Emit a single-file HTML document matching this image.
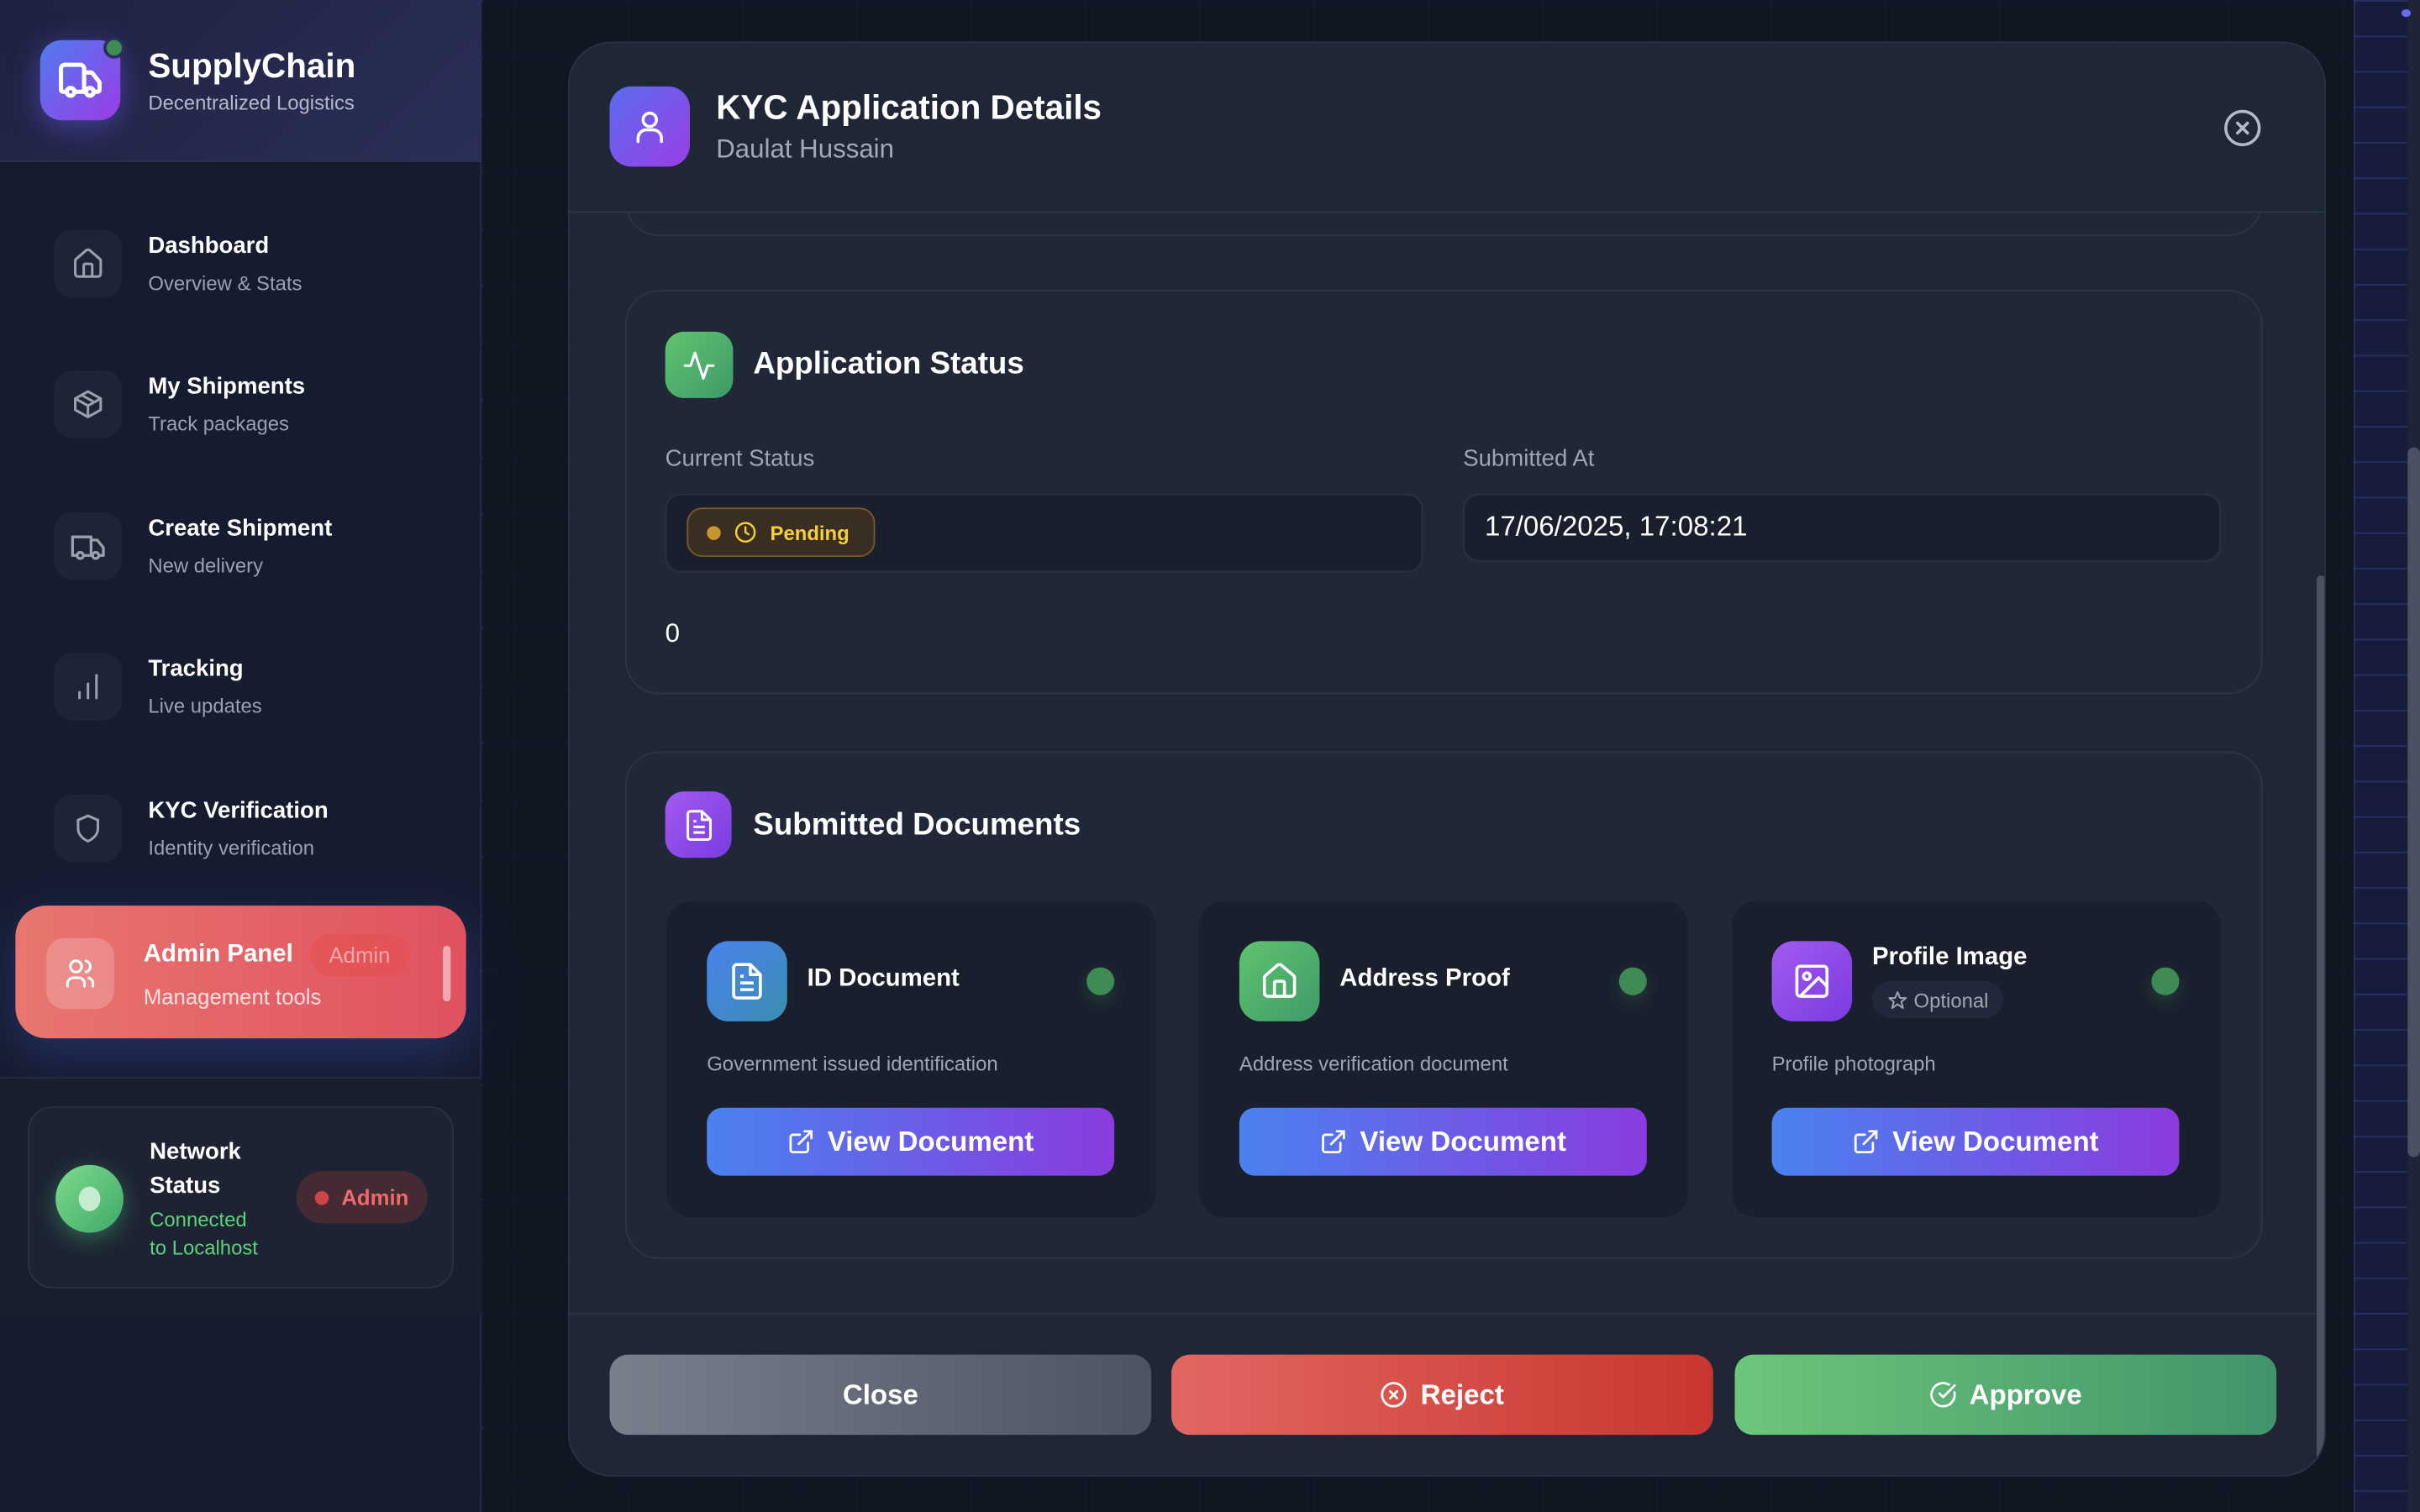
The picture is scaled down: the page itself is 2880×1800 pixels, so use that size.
<!DOCTYPE html>
<html><head><meta charset="utf-8">
<style>
*{box-sizing:border-box;margin:0;padding:0}
html,body{width:2880px;height:1800px;overflow:hidden;background:#141a2a}
#s{position:absolute;left:0;top:0;width:1568px;height:980px;transform:scale(1.836735);transform-origin:0 0;font-family:"Liberation Sans",sans-serif;color:#fff;overflow:hidden;
background-color:#141a2c;
background-image:linear-gradient(rgba(60,80,160,.25) 1px,transparent 1px),linear-gradient(90deg,rgba(60,80,160,.25) 1px,transparent 1px);background-size:37px 37px}
.a{position:absolute}
.sb{left:0;top:0;width:312px;height:980px;background:#161c30;border-right:1px solid #242c44}
.hd{left:0;top:0;width:312px;height:105px;background:linear-gradient(135deg,#1e2240,#2a2f58);border-bottom:1px solid #2a3152}
.ib{width:44px;height:44px;border-radius:12px;background:#1e2436;display:flex;align-items:center;justify-content:center}
.nt{font-size:15px;font-weight:bold;color:#fff}
.ns{font-size:13px;color:#9aa0b0}
.ov{left:313px;top:0;width:1212px;height:980px;background:rgba(17,22,34,.85)}
.md{left:368px;top:27px;width:1139px;height:930px;border-radius:28px;background:#1f2736;border:1px solid #2a3344;overflow:hidden}
.card{border:1px solid #2c3546;border-radius:22px;background:#202838}
.dc{width:317px;height:205px;border-radius:16px;background:#1a1f2e}
.di{width:52px;height:52px;border-radius:14px;display:flex;align-items:center;justify-content:center}
.vb{width:264px;height:44px;border-radius:10px;background:linear-gradient(90deg,#4a82ef,#8a3be0);display:flex;align-items:center;justify-content:center;font-size:18px;font-weight:bold;gap:8px}
.dot{width:18px;height:18px;border-radius:50%;background:#3f8a55;box-shadow:0 4px 10px rgba(60,140,80,.3)}
.fb{height:52px;width:351px;border-radius:12px;display:flex;align-items:center;justify-content:center;font-size:18px;font-weight:bold;gap:8px;top:878px}
</style></head><body><div id="s">
<div class="a sb"></div>
<div class="a hd"></div>
<div class="a" style="left:26px;top:26px;width:52px;height:52px;border-radius:14px;background:linear-gradient(135deg,#4f7cf0,#9b3be6);box-shadow:0 4px 18px rgba(100,90,240,.5);display:flex;align-items:center;justify-content:center">
<svg width="30" height="30" viewBox="0 0 24 24" fill="none" stroke="#fff" stroke-width="2.2" stroke-linecap="round" stroke-linejoin="round"><path d="M14 18V6a2 2 0 0 0-2-2H4a2 2 0 0 0-2 2v11a1 1 0 0 0 1 1h2"/><path d="M15 18H9"/><path d="M19 18h2a1 1 0 0 0 1-1v-3.65a1 1 0 0 0-.22-.62l-3.48-4.350A1 1 0 0 0 17.52 8H14"/><circle cx="17" cy="18" r="2"/><circle cx="7" cy="18" r="2"/></svg></div>
<div class="a" style="left:67px;top:24px;width:14px;height:14px;border-radius:50%;background:#3f8a55;border:2px solid #2a2f58"></div>
<div class="a" style="left:96px;top:30px;font-size:22px;font-weight:bold">SupplyChain</div>
<div class="a" style="left:96px;top:59px;font-size:13px;color:#b4b8c8">Decentralized Logistics</div>

<div class="a ib" style="left:35px;top:149px"><svg width="22" height="22" viewBox="0 0 24 24" fill="none" stroke="#9aa0ae" stroke-width="1.8"><path d="M15 21v-8a1 1 0 0 0-1-1h-4a1 1 0 0 0-1 1v8"/><path d="M3 10a2 2 0 0 1 .7-1.5l7-6a2 2 0 0 1 2.6 0l7 6A2 2 0 0 1 21 10v9a2 2 0 0 1-2 2H5a2 2 0 0 1-2-2z"/></svg></div>
<div class="a nt" style="left:96px;top:151px">Dashboard</div><div class="a ns" style="left:96px;top:176px">Overview &amp; Stats</div>
<div class="a ib" style="left:35px;top:240px"><svg width="22" height="22" viewBox="0 0 24 24" fill="none" stroke="#9aa0ae" stroke-width="1.8" stroke-linejoin="round"><path d="M21 8 12 3 3 8v8l9 5 9-5z"/><path d="M3 8l9 5 9-5M12 13v8M7.5 5.5l9 5"/></svg></div>
<div class="a nt" style="left:96px;top:242px">My Shipments</div><div class="a ns" style="left:96px;top:267px">Track packages</div>
<div class="a ib" style="left:35px;top:332px"><svg width="24" height="24" viewBox="0 0 24 24" fill="none" stroke="#9aa0ae" stroke-width="1.8" stroke-linejoin="round"><path d="M14 18V6H2v12h3"/><path d="M15 18H9M19 18h3v-5l-4-5h-4"/><circle cx="17" cy="18" r="2"/><circle cx="7" cy="18" r="2"/></svg></div>
<div class="a nt" style="left:96px;top:334px">Create Shipment</div><div class="a ns" style="left:96px;top:359px">New delivery</div>
<div class="a ib" style="left:35px;top:423px"><svg width="22" height="22" viewBox="0 0 24 24" fill="none" stroke="#9aa0ae" stroke-width="1.8" stroke-linecap="round"><path d="M6 20v-4M12 20V10M18 20V4"/></svg></div>
<div class="a nt" style="left:96px;top:425px">Tracking</div><div class="a ns" style="left:96px;top:450px">Live updates</div>
<div class="a ib" style="left:35px;top:515px"><svg width="22" height="22" viewBox="0 0 24 24" fill="none" stroke="#9aa0ae" stroke-width="1.8"><path d="M12 3l7 3v6c0 4-3 7-7 9-4-2-7-5-7-9V6z"/></svg></div>
<div class="a nt" style="left:96px;top:517px">KYC Verification</div><div class="a ns" style="left:96px;top:542px">Identity verification</div>

<div class="a" style="left:10px;top:587px;width:292px;height:86px;border-radius:20px;background:linear-gradient(90deg,#e8766f,#e0525f);box-shadow:0 10px 30px rgba(60,90,200,.35)"></div>
<div class="a" style="left:30px;top:608px;width:44px;height:46px;border-radius:12px;background:rgba(255,255,255,.2);display:flex;align-items:center;justify-content:center"><svg width="22" height="22" viewBox="0 0 24 24" fill="none" stroke="#fff" stroke-width="1.8" stroke-linecap="round"><circle cx="9" cy="7" r="4"/><path d="M3 21v-2a4 4 0 0 1 4-4h4a4 4 0 0 1 4 4v2M16 3.1a4 4 0 0 1 0 7.8M21 21v-2a4 4 0 0 0-3-3.9"/></svg></div>
<div class="a" style="left:93px;top:610px;font-size:16px;font-weight:bold">Admin Panel</div>
<div class="a" style="left:201px;top:605px;width:64px;height:28px;border-radius:14px;background:rgba(230,80,80,.6);color:#f5a9a9;font-size:14px;display:flex;align-items:center;justify-content:center">Admin</div>
<div class="a" style="left:93px;top:638px;font-size:14px;color:#fde0e0">Management tools</div>
<div class="a" style="left:287px;top:613px;width:5px;height:36px;border-radius:3px;background:rgba(255,255,255,.5)"></div>
<div class="a" style="left:0;top:698px;width:312px;height:155px;background:#181e2e;border-top:1px solid #242c40"></div>
<div class="a" style="left:18px;top:717px;width:276px;height:118px;border-radius:16px;background:#1d2333;border:1px solid #2a3142"></div>
<div class="a" style="left:36px;top:755px;width:44px;height:44px;border-radius:50%;background:linear-gradient(135deg,#7ddc8c,#3fa86a);box-shadow:0 4px 14px rgba(80,200,120,.4)"></div>
<div class="a" style="left:51px;top:769px;width:14px;height:16px;border-radius:50%;background:#c5ecd0"></div>
<div class="a" style="left:97px;top:736px;font-size:15px;font-weight:bold;line-height:22px">Network<br>Status</div>
<div class="a" style="left:97px;top:782px;font-size:13px;color:#5fd07a;line-height:18px">Connected<br>to Localhost</div>
<div class="a" style="left:192px;top:759px;width:85px;height:34px;border-radius:17px;background:#452a33;display:flex;align-items:center;justify-content:center;gap:8px;font-size:14px;font-weight:bold;color:#ec6b6b"><span style="width:9px;height:9px;border-radius:50%;background:#c44"></span>Admin</div>

<div class="a ov"></div>
<div class="a" style="left:1525px;top:0;width:35px;height:980px;background-color:#171b3c;background-image:linear-gradient(rgba(70,80,170,.35) 1px,transparent 1px),linear-gradient(90deg,rgba(70,80,170,.35) 1px,transparent 1px);background-size:37px 23px"></div>
<div class="a" style="left:1560px;top:0;width:8px;height:980px;background:#1f2436"></div>
<div class="a" style="left:1560px;top:290px;width:8px;height:460px;border-radius:4px;background:#4a5262"></div>
<div class="a" style="left:1556px;top:6px;width:6px;height:5px;border-radius:50%;background:#6a6af0"></div>

<div class="a md">
<div class="a card" style="left:36px;top:70px;width:1061px;height:55px;border-top:none;border-radius:0 0 22px 22px"></div>
<div class="a" style="left:0;top:0;width:1139px;height:110px;background:#1f2736;z-index:1;border-bottom:1px solid #2c3546"></div>
<div class="a" style="left:26px;top:28px;width:52px;height:52px;border-radius:14px;background:linear-gradient(135deg,#5b6cf0,#9a3ee6);display:flex;align-items:center;justify-content:center;z-index:2"><svg width="26" height="26" viewBox="0 0 24 24" fill="none" stroke="#fff" stroke-width="1.8" stroke-linecap="round"><circle cx="12" cy="8" r="4"/><path d="M5 21v-2a5 5 0 0 1 5-5h4a5 5 0 0 1 5 5v2"/></svg></div>
<div class="a" style="left:95px;top:29px;font-size:22px;font-weight:bold;z-index:2">KYC Application Details</div>
<div class="a" style="left:95px;top:59px;font-size:17px;color:#a4a9b6;z-index:2">Daulat Hussain</div>
<svg class="a" style="left:1071px;top:42px;z-index:2" width="26" height="26" viewBox="0 0 24 24" fill="none" stroke="#b6bac4" stroke-width="1.8" stroke-linecap="round"><circle cx="12" cy="12" r="10"/><path d="M15 9l-6 6M9 9l6 6"/></svg>

<div class="a card" style="left:36px;top:160px;width:1061px;height:262px"></div>
<div class="a" style="left:62px;top:187px;width:44px;height:43px;border-radius:12px;background:linear-gradient(135deg,#5fc46e,#3f9a6a);display:flex;align-items:center;justify-content:center"><svg width="22" height="22" viewBox="0 0 24 24" fill="none" stroke="#fff" stroke-width="1.8" stroke-linecap="round" stroke-linejoin="round"><path d="M22 12h-4l-3 9L9 3l-3 9H2"/></svg></div>
<div class="a" style="left:119px;top:197px;font-size:20px;font-weight:bold">Application Status</div>
<div class="a" style="left:62px;top:261px;font-size:15px;color:#a0a5b2">Current Status</div>
<div class="a" style="left:579px;top:261px;font-size:15px;color:#a0a5b2">Submitted At</div>
<div class="a" style="left:62px;top:292px;width:491px;height:51px;border-radius:10px;background:#1a1f2d;border:1px solid #2a3242"></div>
<div class="a" style="left:76px;top:301px;width:122px;height:32px;border-radius:10px;background:#3a2e22;border:1px solid #7a5a2a;display:flex;align-items:center;gap:8px;padding-left:12px;font-size:13px;font-weight:bold;color:#f5cf3a"><span style="width:9px;height:9px;border-radius:50%;background:#c8962e"></span><svg width="16" height="16" viewBox="0 0 24 24" fill="none" stroke="#f5cf3a" stroke-width="2" stroke-linecap="round"><circle cx="12" cy="12" r="9"/><path d="M12 7v5l3 2"/></svg>Pending</div>
<div class="a" style="left:579px;top:292px;width:491px;height:44px;border-radius:10px;background:#1a1f2d;border:1px solid #2a3242"></div>
<div class="a" style="left:593px;top:303px;font-size:18px">17/06/2025, 17:08:21</div>
<div class="a" style="left:62px;top:373px;font-size:17px">0</div>

<div class="a card" style="left:36px;top:459px;width:1061px;height:329px"></div>
<div class="a" style="left:62px;top:485px;width:43px;height:43px;border-radius:12px;background:linear-gradient(135deg,#a35af0,#7a3be0);display:flex;align-items:center;justify-content:center"><svg width="22" height="22" viewBox="0 0 24 24" fill="none" stroke="#fff" stroke-width="1.8" stroke-linejoin="round"><path d="M14 2H6a2 2 0 0 0-2 2v16a2 2 0 0 0 2 2h12a2 2 0 0 0 2-2V8z"/><path d="M14 2v6h6M8 13h8M8 17h8M8 9h2"/></svg></div>
<div class="a" style="left:119px;top:496px;font-size:20px;font-weight:bold">Submitted Documents</div>

<div class="a dc" style="left:63px;top:556px"></div>
<div class="a di" style="left:89px;top:582px;background:linear-gradient(135deg,#4a82ef,#3a8eb0)"><svg width="26" height="26" viewBox="0 0 24 24" fill="none" stroke="#fff" stroke-width="1.8" stroke-linejoin="round"><path d="M14 2H6a2 2 0 0 0-2 2v16a2 2 0 0 0 2 2h12a2 2 0 0 0 2-2V8z"/><path d="M14 2v6h6M8 13h8M8 17h8M8 9h2"/></svg></div>
<div class="a" style="left:154px;top:598px;font-size:16px;font-weight:bold">ID Document</div>
<div class="a dot" style="left:335px;top:599px"></div>
<div class="a" style="left:89px;top:654px;font-size:13px;color:#a0a5b2">Government issued identification</div>
<div class="a vb" style="left:89px;top:690px"><svg width="18" height="18" viewBox="0 0 24 24" fill="none" stroke="#fff" stroke-width="2" stroke-linecap="round"><path d="M15 3h6v6M10 14 21 3M18 13v6a2 2 0 0 1-2 2H5a2 2 0 0 1-2-2V8a2 2 0 0 1 2-2h6"/></svg>View Document</div>

<div class="a dc" style="left:408px;top:556px"></div>
<div class="a di" style="left:434px;top:582px;background:linear-gradient(135deg,#5fc46e,#3f9a6a)"><svg width="26" height="26" viewBox="0 0 24 24" fill="none" stroke="#fff" stroke-width="1.8"><path d="M15 21v-8a1 1 0 0 0-1-1h-4a1 1 0 0 0-1 1v8"/><path d="M3 10a2 2 0 0 1 .7-1.5l7-6a2 2 0 0 1 2.6 0l7 6A2 2 0 0 1 21 10v9a2 2 0 0 1-2 2H5a2 2 0 0 1-2-2z"/></svg></div>
<div class="a" style="left:499px;top:598px;font-size:16px;font-weight:bold">Address Proof</div>
<div class="a dot" style="left:680px;top:599px"></div>
<div class="a" style="left:434px;top:654px;font-size:13px;color:#a0a5b2">Address verification document</div>
<div class="a vb" style="left:434px;top:690px"><svg width="18" height="18" viewBox="0 0 24 24" fill="none" stroke="#fff" stroke-width="2" stroke-linecap="round"><path d="M15 3h6v6M10 14 21 3M18 13v6a2 2 0 0 1-2 2H5a2 2 0 0 1-2-2V8a2 2 0 0 1 2-2h6"/></svg>View Document</div>

<div class="a dc" style="left:753px;top:556px"></div>
<div class="a di" style="left:779px;top:582px;background:linear-gradient(135deg,#a35af0,#7a3be0)"><svg width="26" height="26" viewBox="0 0 24 24" fill="none" stroke="#fff" stroke-width="1.8"><rect x="3" y="3" width="18" height="18" rx="2"/><circle cx="9" cy="9" r="2"/><path d="M21 15l-5-5L5 21"/></svg></div>
<div class="a" style="left:844px;top:584px;font-size:16px;font-weight:bold">Profile Image</div>
<div class="a" style="left:844px;top:608px;height:24px;padding:0 10px;border-radius:12px;background:#20283a;font-size:13px;color:#a0a5b2;display:flex;align-items:center;gap:4px"><svg width="13" height="13" viewBox="0 0 24 24" fill="none" stroke="#a0a5b2" stroke-width="2" stroke-linejoin="round"><path d="M12 2l3 7h7l-5.5 4.5 2 7.5-6.5-4.5-6.5 4.5 2-7.5L2 9h7z"/></svg>Optional</div>
<div class="a dot" style="left:1025px;top:599px"></div>
<div class="a" style="left:779px;top:654px;font-size:13px;color:#a0a5b2">Profile photograph</div>
<div class="a vb" style="left:779px;top:690px"><svg width="18" height="18" viewBox="0 0 24 24" fill="none" stroke="#fff" stroke-width="2" stroke-linecap="round"><path d="M15 3h6v6M10 14 21 3M18 13v6a2 2 0 0 1-2 2H5a2 2 0 0 1-2-2V8a2 2 0 0 1 2-2h6"/></svg>View Document</div>

<div class="a" style="left:0;top:823px;width:1139px;height:107px;background:#1f2736;border-top:1px solid #2c3546"></div>
<div class="a" style="left:1132px;top:345px;width:6px;height:585px;border-radius:3px;background:#4a5262"></div>
<div class="a fb" style="left:26px;top:850px;background:linear-gradient(90deg,#7a7f8c,#4c5363)">Close</div>
<div class="a fb" style="left:390px;top:850px;background:linear-gradient(90deg,#e26761,#c9362f)"><svg width="18" height="18" viewBox="0 0 24 24" fill="none" stroke="#fff" stroke-width="2" stroke-linecap="round"><circle cx="12" cy="12" r="10"/><path d="M15 9l-6 6M9 9l6 6"/></svg>Reject</div>
<div class="a fb" style="left:755px;top:850px;background:linear-gradient(90deg,#6cc67a,#41946a)"><svg width="18" height="18" viewBox="0 0 24 24" fill="none" stroke="#fff" stroke-width="2" stroke-linecap="round"><path d="M21.8 10A10 10 0 1 1 17 3.3"/><path d="M9 11l3 3L22 4"/></svg>Approve</div>
</div>
</div></body></html>
